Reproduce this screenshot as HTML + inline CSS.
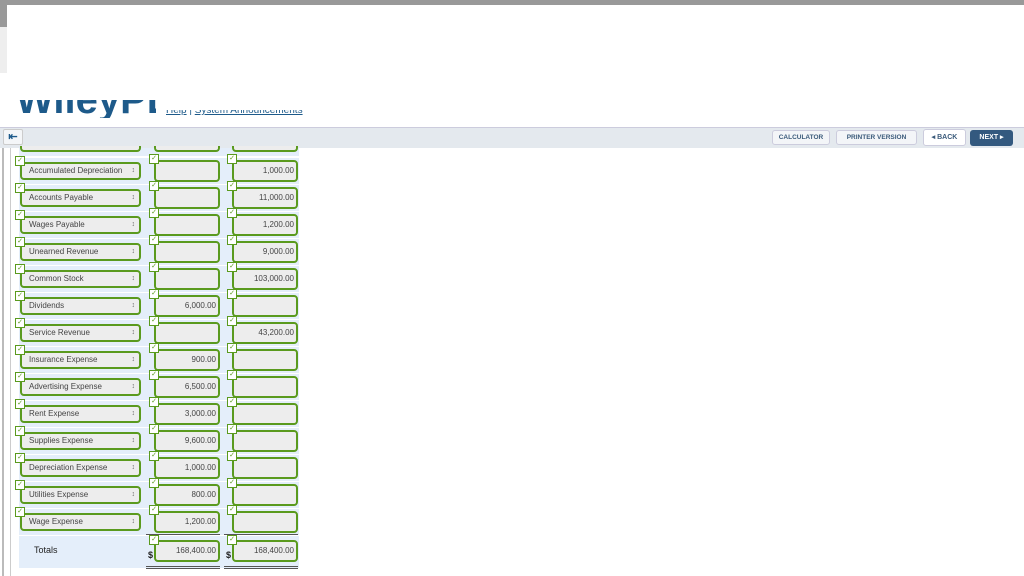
<!DOCTYPE html><html><head><style>
*{box-sizing:border-box}
body{margin:0;width:1024px;height:576px;overflow:hidden;background:#fff;font-family:"Liberation Sans",sans-serif;position:relative}
.a{position:absolute}
.sel{position:absolute;left:20px;width:121px;height:18px;border:2px solid #5a9a1e;border-radius:4px;background:#ededed;font-size:8px;color:#444;line-height:14px;padding-left:7px}
.sel:after{content:"\2195";position:absolute;right:4px;font-size:7px;color:#666}
.inp{position:absolute;width:66px;height:22px;border:2px solid #5a9a1e;border-radius:4px;background:#ededed;font-size:8px;color:#444;line-height:18px;text-align:right;padding-right:2px}
.ck{position:absolute;width:10px;height:10px;border:1px solid #5a9a1e;background:#fff;font-size:7px;line-height:8px;text-align:center;color:#5a9a1e}
.row{position:absolute;left:19px;width:280px;height:26px;background:#e4eefa}
</style></head><body>
<div class="a" style="left:0;top:0;width:1024px;height:5px;background:#999"></div>
<div class="a" style="left:0;top:5px;width:7px;height:22px;background:#999"></div>
<div class="a" style="left:0;top:27px;width:7px;height:46px;background:#eee"></div>
<div class="a" style="left:16px;top:100px;height:18px;width:140px;overflow:hidden"><div class="a" style="left:0;top:-20px;font-size:40px;font-weight:bold;color:#1d5a8a;line-height:40px;white-space:nowrap">WileyPLUS</div></div>
<div class="a" style="left:166px;top:110px;height:8px;width:160px;overflow:hidden"><div class="a" style="left:0;top:-4px;font-size:10px;color:#1d5a8a;line-height:10px;white-space:nowrap"><u>Help</u> | <u>System Announcements</u></div></div>
<div class="a" style="left:0;top:127px;width:1024px;height:21px;background:#e4e9ee;border-top:1px solid #ccd"></div>
<div class="a" style="left:3px;top:129px;width:20px;height:16px;background:#f4f6f8;border:1px solid #ccc;border-radius:2px;font-size:11px;color:#1d5a8a;text-align:center;line-height:14px;font-weight:bold">⇤</div>
<div class="a" style="left:772px;top:130px;width:58px;height:15px;background:#f3f5f8;border:1px solid #ccd;border-radius:3px;font-size:6.5px;font-weight:bold;color:#3a5a7a;text-align:center;line-height:13px">CALCULATOR</div>
<div class="a" style="left:836px;top:130px;width:81px;height:15px;background:#f3f5f8;border:1px solid #ccd;border-radius:3px;font-size:6.5px;font-weight:bold;color:#3a5a7a;text-align:center;line-height:13px">PRINTER VERSION</div>
<div class="a" style="left:923px;top:129px;width:43px;height:17px;background:#fff;border:1px solid #ccd;border-radius:3px;font-size:7px;font-weight:bold;color:#3a5a7a;text-align:center;line-height:15px">◂ BACK</div>
<div class="a" style="left:970px;top:130px;width:43px;height:16px;background:#33597f;border-radius:3px;font-size:7px;font-weight:bold;color:#fff;text-align:center;line-height:15px">NEXT ▸</div>
<div class="a" style="left:2px;top:148px;width:2px;height:428px;background:#bbb"></div>
<div class="a" style="left:10px;top:148px;width:1px;height:428px;background:#ccc"></div>
<div class="row" style="top:148px;height:8px"></div>
<div class="a" style="left:20px;top:146px;width:121px;height:6px;border:2px solid #5a9a1e;border-top:none;border-radius:0 0 4px 4px;background:#ededed"></div>
<div class="a" style="left:154px;top:146px;width:66px;height:6px;border:2px solid #5a9a1e;border-top:none;border-radius:0 0 4px 4px;background:#ededed"></div>
<div class="a" style="left:232px;top:146px;width:66px;height:6px;border:2px solid #5a9a1e;border-top:none;border-radius:0 0 4px 4px;background:#ededed"></div>
<div id="rows"></div>
<script>
var d=[["Accumulated Depreciation","","1,000.00"],["Accounts Payable","","11,000.00"],["Wages Payable","","1,200.00"],["Unearned Revenue","","9,000.00"],["Common Stock","","103,000.00"],["Dividends","6,000.00",""],["Service Revenue","","43,200.00"],["Insurance Expense","900.00",""],["Advertising Expense","6,500.00",""],["Rent Expense","3,000.00",""],["Supplies Expense","9,600.00",""],["Depreciation Expense","1,000.00",""],["Utilities Expense","800.00",""],["Wage Expense","1,200.00",""]];
var h="";d.forEach(function(r,i){var c=171+27*i;
h+='<div class="row" style="top:'+(c-13)+'px"></div>';
h+='<div class="sel" style="top:'+(c-9)+'px">'+r[0]+'</div>';
h+='<div class="ck" style="left:15px;top:'+(c-15)+'px">✓</div>';
h+='<div class="inp" style="left:154px;top:'+(c-11)+'px">'+r[1]+'</div>';
h+='<div class="ck" style="left:149px;top:'+(c-17)+'px">✓</div>';
h+='<div class="inp" style="left:232px;top:'+(c-11)+'px">'+r[2]+'</div>';
h+='<div class="ck" style="left:227px;top:'+(c-17)+'px">✓</div>';});
document.getElementById("rows").innerHTML=h;
</script>
<div class="row" style="top:536px;height:32px"></div>
<div class="a" style="left:146px;top:534px;width:74px;height:1px;background:#555"></div>
<div class="a" style="left:224px;top:534px;width:74px;height:1px;background:#555"></div>
<div class="a" style="left:34px;top:545px;font-size:9px;color:#222">Totals</div>
<div class="a" style="left:148px;top:550px;font-size:9px;font-weight:bold;color:#222">$</div>
<div class="a" style="left:226px;top:550px;font-size:9px;font-weight:bold;color:#222">$</div>
<div class="inp" style="left:154px;top:540px">168,400.00</div>
<div class="ck" style="left:149px;top:535px">✓</div>
<div class="inp" style="left:232px;top:540px">168,400.00</div>
<div class="ck" style="left:227px;top:535px">✓</div>
<div class="a" style="left:146px;top:566px;width:74px;height:1px;background:#555;box-shadow:0 2px 0 #555"></div>
<div class="a" style="left:224px;top:566px;width:74px;height:1px;background:#555;box-shadow:0 2px 0 #555"></div>
</body></html>
